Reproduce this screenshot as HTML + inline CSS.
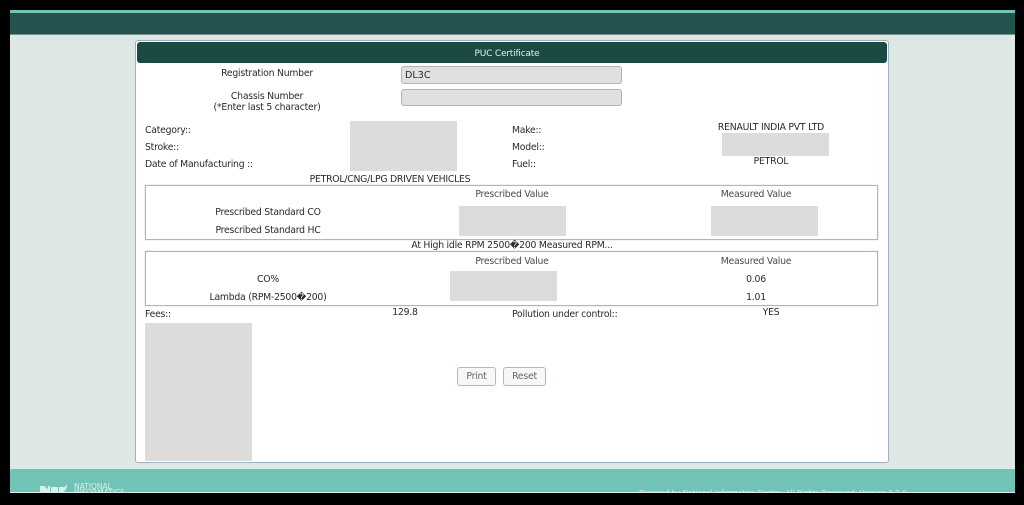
<!DOCTYPE html>
<html><head><meta charset="utf-8">
<style>
html,body{margin:0;padding:0;width:1024px;height:505px;overflow:hidden;background:#000}
#s{position:absolute;left:0;top:0;width:1024px;height:505px;overflow:hidden;background:#000;font-family:"DejaVu Sans","Liberation Sans",sans-serif;font-size:9.3px;letter-spacing:-.24px;color:#2a2a2a;filter:blur(.25px)}
#s div{position:absolute;box-sizing:border-box}
.t{white-space:nowrap;line-height:12px;height:12px;margin-top:1px}
.c{text-align:center}
.g{background:#dcdcdc}
.b{background:#fff;border:1px solid #9dbcca;box-shadow:0 0 1px #a9c3cf}
.m{color:#4a4a4a}
.in{background:#e0e0e0;border:1px solid #aab6bc;border-radius:3px}
.btn{background:#f6f8f8;border:1px solid #a9bcc6;border-radius:3px;text-align:center;color:#666;line-height:18px}
</style></head><body>
<div id="s">
<div style="left:10px;top:10px;width:1005px;height:483px;background:#dde8e5"></div>
<div style="left:10px;top:10px;width:1005px;height:3px;background:#74c2b8"></div>
<div style="left:10px;top:13px;width:1005px;height:22px;background:#23534f"></div>
<div style="left:10px;top:34px;width:1005px;height:1px;background:#7d8f8c"></div>
<div style="left:10px;top:469px;width:1005px;height:24px;background:#72c3b7"></div>
<div style="left:10px;top:492px;width:1005px;height:1px;background:#dfe9e7"></div>

<div style="left:40px;top:483px;width:90px;height:9px;overflow:hidden">
  <svg width="30" height="9" style="position:absolute;left:0;top:0"><path d="M0 3h4l4 3V3h2v6H0zM11 4h7v5h-7zM19 4h6l2-3v3l-3 5h-5z" fill="#d8efea"/></svg>
  <div class="t" style="left:34px;top:-1px;font-size:7.5px;line-height:8px;letter-spacing:0;color:#d8efea">NATIONAL</div>
  <div class="t" style="left:34px;top:5px;font-size:7.5px;line-height:8px;letter-spacing:0;color:#d8efea">INFORMATICS</div>
</div>
<div style="left:600px;top:487px;width:340px;height:5px;overflow:hidden">
  <div class="t" style="left:39px;top:-1px;font-size:7.2px;letter-spacing:-.02px;color:#d8efea">Powered by National Informatics Centre, All Rights Reserved. Version-2.7.0</div>
</div>

<div style="left:135px;top:40px;width:754px;height:423px;background:#fff;border:1px solid #9fb0c0;border-radius:3px"></div>
<div style="left:137px;top:42px;width:750px;height:21px;background:#1b4a45;border-radius:3px"></div>
<div class="t c" style="left:137px;top:47px;width:740px;color:#e4efed;font-size:9px;letter-spacing:-.2px">PUC Certificate</div>

<div class="t c" style="left:167px;top:67px;width:200px">Registration Number</div>
<div class="t c" style="left:167px;top:90px;width:200px">Chassis Number</div>
<div class="t c" style="left:167px;top:101px;width:200px">(*Enter last 5 character)</div>
<div class="in" style="left:401px;top:66px;width:221px;height:18px"></div>
<div class="in" style="left:401px;top:89px;width:221px;height:17px"></div>
<div class="t" style="left:405px;top:69px;letter-spacing:0;font-size:9.6px">DL3C</div>

<div class="t" style="left:145px;top:124px">Category::</div>
<div class="t" style="left:145px;top:141px">Stroke::</div>
<div class="t" style="left:145px;top:158px">Date of Manufacturing ::</div>
<div class="g" style="left:350px;top:121px;width:107px;height:50px"></div>
<div class="t" style="left:512px;top:124px">Make::</div>
<div class="t" style="left:512px;top:141px">Model::</div>
<div class="t" style="left:512px;top:158px">Fuel::</div>
<div class="t c" style="left:671px;top:121px;width:200px">RENAULT INDIA PVT LTD</div>
<div class="g" style="left:722px;top:133px;width:107px;height:23px"></div>
<div class="t c" style="left:671px;top:155px;width:200px">PETROL</div>

<div class="t c" style="left:290px;top:173px;width:200px">PETROL/CNG/LPG DRIVEN VEHICLES</div>
<div class="b" style="left:145px;top:185px;width:733px;height:55px"></div>
<div class="t c m" style="left:412px;top:188px;width:200px">Prescribed Value</div>
<div class="t c m" style="left:656px;top:188px;width:200px">Measured Value</div>
<div class="t c" style="left:168px;top:206px;width:200px">Prescribed Standard CO</div>
<div class="t c" style="left:168px;top:224px;width:200px">Prescribed Standard HC</div>
<div class="g" style="left:459px;top:206px;width:107px;height:30px"></div>
<div class="g" style="left:711px;top:206px;width:107px;height:30px"></div>

<div class="t c" style="left:362px;top:239px;width:300px">At High idle RPM 2500�200 Measured RPM...</div>
<div class="b" style="left:145px;top:251px;width:733px;height:55px"></div>
<div class="t c m" style="left:412px;top:255px;width:200px">Prescribed Value</div>
<div class="t c m" style="left:656px;top:255px;width:200px">Measured Value</div>
<div class="t c" style="left:168px;top:273px;width:200px">CO%</div>
<div class="t c" style="left:168px;top:291px;width:200px">Lambda (RPM-2500�200)</div>
<div class="g" style="left:450px;top:271px;width:107px;height:30px"></div>
<div class="t c" style="left:656px;top:273px;width:200px">0.06</div>
<div class="t c" style="left:656px;top:291px;width:200px">1.01</div>

<div class="t" style="left:145px;top:308px">Fees::</div>
<div class="t c" style="left:305px;top:306px;width:200px">129.8</div>
<div class="t" style="left:512px;top:308px">Pollution under control::</div>
<div class="t c" style="left:671px;top:306px;width:200px">YES</div>
<div class="g" style="left:145px;top:323px;width:107px;height:138px"></div>

<div class="btn" style="left:457px;top:367px;width:39px;height:19px">Print</div>
<div class="btn" style="left:503px;top:367px;width:43px;height:19px">Reset</div>
</div>
</body></html>
